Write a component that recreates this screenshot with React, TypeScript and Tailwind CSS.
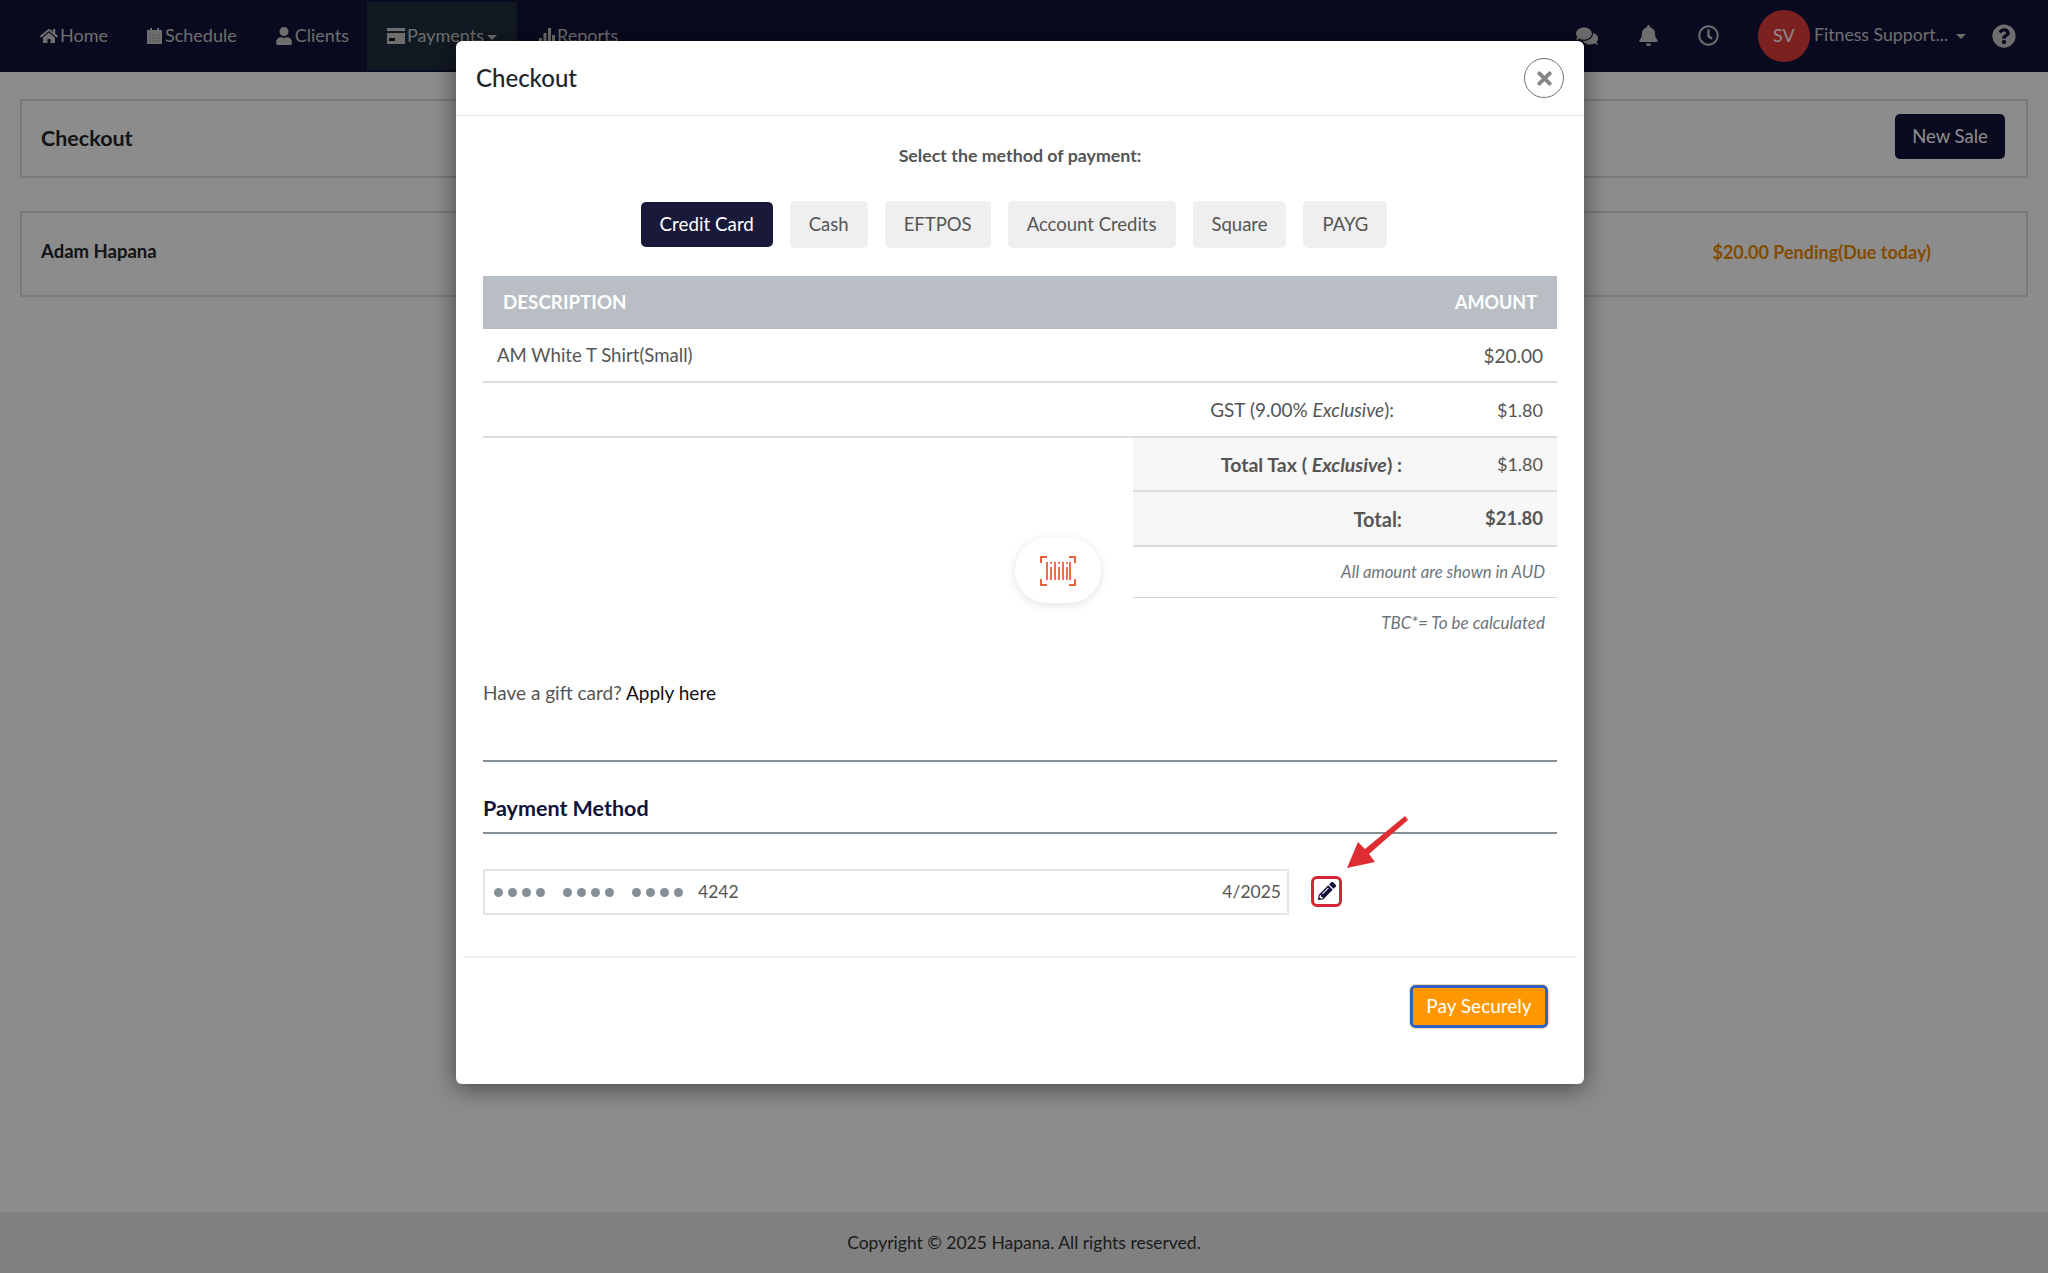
import { FaBell, FaComments, FaHome, FaPencilAlt, FaQuestionCircle, FaRegClock, FaTimes, FaUser } from 'react-icons/fa'

const methods = ['Cash', 'EFTPOS', 'Account Credits', 'Square', 'PAYG']

function CalendarIcon() {
  return (
    <svg width="17" height="18" viewBox="0 0 17 18" fill="currentColor">
      <path d="M1 3h3V1h2v2h5V1h2v2h3v14H1z" />
      <path
        d="M3 7h2v2H3zm3 0h2v2H6zm3 0h2v2H9zm3 0h2v2h-2zM3 10h2v2H3zm3 0h2v2H6zm3 0h2v2H9zm3 0h2v2h-2zM3 13h2v2H3zm3 0h2v2H6zm3 0h2v2H9zm3 0h2v2h-2z"
        fill="#8c8c8c"
        opacity="0.4"
      />
    </svg>
  )
}

function CardIcon() {
  return (
    <svg width="18" height="16" viewBox="0 0 18 16" fill="currentColor">
      <path d="M0 0h18v3H0zM0 5h18v11H0z" />
      <path d="M2 10h6v3H2z" fill="#111a24" />
    </svg>
  )
}

function BarsIcon() {
  return (
    <svg width="16" height="16" viewBox="0 0 16 16" fill="currentColor">
      <path d="M0 10h3v6H0zM4.500 5h3v11h-3zM9 0h3v16H9zM13 7h3v9h-3z" />
    </svg>
  )
}

function BarcodeIcon() {
  return (
    <svg width="36" height="30" viewBox="0 0 36 30" fill="none" stroke="#e8623d" strokeWidth="2">
      <path d="M1 7V1h6M29 1h6v6M1 23v6h6M29 29h6v-6" />
      <path d="M7 6v18M11 11v13M11 6v2M15 6v18M19 11v13M19 6v2M23 6v18M27 11v13M27 6v2M30 6v18" strokeWidth="1.800" />
    </svg>
  )
}

function NavItem({ icon, label }: { icon: React.ReactNode; label: string }) {
  return (
    <div className="flex items-center gap-[2px] text-[18px] text-[#c9c9c9]">
      {icon}
      <span>{label}</span>
    </div>
  )
}

function Dots() {
  return (
    <span className="flex gap-[5px]">
      {[0, 1, 2, 3].map((i) => (
        <span key={i} className="h-[9px] w-[9px] rounded-full bg-[#868e96]" />
      ))}
    </span>
  )
}

export default function App() {
  return (
    <div className="relative flex h-[1273px] flex-col overflow-hidden bg-white font-['Lato','Liberation_Sans',sans-serif] text-[#555]">
      {/* page behind the dialog */}
      <header className="flex h-[72px] shrink-0 items-center justify-between bg-[#12133a] pb-[1px] pl-[40px] pr-[32px]">
        <nav className="flex h-full items-center gap-[38px]">
          <NavItem icon={<FaHome size={18} />} label="Home" />
          <NavItem icon={<CalendarIcon />} label="Schedule" />
          <NavItem icon={<FaUser size={18} />} label="Clients" />
          <div className="-mx-[20px] flex h-[68px] items-center bg-[#1f2f40] px-[20px]">
            <NavItem
              icon={<CardIcon />}
              label="Payments"
            />
            <span className="ml-[3px] mt-[4px] border-x-[5px] border-t-[5px] border-x-transparent border-t-[#c9c9c9]" />
          </div>
          <div className="ml-[4px]">
            <NavItem icon={<BarsIcon />} label="Reports" />
          </div>
        </nav>
        <div className="flex items-center text-[#c9c9c9]">
          <FaComments size={22} className="mr-[40px]" />
          <FaBell size={21} className="mr-[39px]" />
          <FaRegClock size={21} className="mr-[39px]" />
          <div className="flex h-[52px] w-[52px] items-center justify-center rounded-full bg-[#e23b3b] text-[18px] text-white">SV</div>
          <span className="ml-[4px] text-[17.700px]">Fitness Support...</span>
          <span className="ml-[8px] mt-[2px] border-x-[5px] border-t-[5px] border-x-transparent border-t-[#c9c9c9]" />
          <FaQuestionCircle size={24} className="ml-[26px]" />
        </div>
      </header>

      <main className="flex-1 px-[20px] pt-[27px]">
        <div className="flex h-[79px] items-center justify-between border-2 border-[#dedede] pl-[19px] pr-[21px]">
          <h1 className="text-[21.500px] font-bold text-[#212529]">Checkout</h1>
          <button className="mb-[4px] h-[45px] w-[110px] rounded-[5px] bg-[#12133a] text-[18.500px] text-white">New Sale</button>
        </div>
        <div className="mt-[33px] flex h-[86px] items-center justify-between border-2 border-[#dedede] pb-[4px] pl-[19px] pr-[95px]">
          <span className="text-[18.500px] font-bold text-[#212529]">Adam Hapana</span>
          <span className="text-[18px] font-bold text-[#f08a00]">$20.00 Pending(Due today)</span>
        </div>
      </main>

      <footer className="flex h-[61px] shrink-0 items-center justify-center bg-[#e9e9e9] pt-[2px] text-[17.500px] text-[#333]">
        Copyright © 2025 Hapana. All rights reserved.
      </footer>

      {/* overlay and dialog */}
      <div className="absolute inset-0 bg-black/45" />
      <div className="absolute left-[456px] top-[41px] w-[1128px] rounded-[6px] bg-white shadow-[0_4px_24px_rgba(0,0,0,0.5)]">
        <div className="flex h-[75px] items-center justify-between border-b border-[#dee2e6] pl-[20px] pr-[20px]">
          <h2 className="text-[24px] font-medium text-[#212529]">Checkout</h2>
          <button className="flex h-[40px] w-[40px] items-center justify-center rounded-full border border-[#6c757d] text-[#868686]">
            <FaTimes size={21} />
          </button>
        </div>

        <div className="px-[27px]">
          <p className="pt-[27px] text-center text-[17.800px] font-bold leading-[24px]">Select the method of payment:</p>

          <div className="mt-[34px] flex justify-center gap-[17px] pr-[12px]">
            <button className="my-px h-[45px] w-[132px] rounded-[5px] bg-[#19193a] text-[18.800px] text-white">Credit Card</button>
            {methods.map((m) => (
              <button key={m} className="h-[47px] rounded-[5px] bg-[#efefef] px-[19px] pt-[1px] text-[18.500px]">
                {m}
              </button>
            ))}
          </div>

          <div className="mt-[28px]">
            <div className="flex h-[53px] items-center justify-between bg-[#b9bec4] px-[20px] text-[18px] font-bold text-white">
              <span className="text-[18.800px]">DESCRIPTION</span>
              <span>AMOUNT</span>
            </div>
            <div className="flex h-[54px] items-center justify-between border-b-2 border-[#dcdcdc] px-[14px] pt-[2px] text-[18.600px]">
              <span>AM White T Shirt(Small)</span>
              <span className="text-[19px]">$20.00</span>
            </div>
            <div className="flex h-[55px] items-center justify-end border-b-2 border-[#dcdcdc] pr-[14px] pt-[2px] text-[19px]">
              <span>GST (9.00% <em>Exclusive</em>):</span>
              <span className="w-[149px] text-right text-[18px]">$1.80</span>
            </div>

            <div className="flex">
              <div className="flex flex-1 items-start justify-end pr-[32px] pt-[100px]">
                <div className="flex h-[65px] w-[86px] items-center justify-center rounded-[32px] bg-white shadow-[0_2px_10px_rgba(0,0,0,0.12)]">
                  <BarcodeIcon />
                </div>
              </div>
              <div className="w-[424px]">
                <div className="flex h-[54px] items-center justify-end border-b-2 border-[#dcdcdc] bg-[#f7f7f7] pr-[14px] pt-[1px] text-[19.500px]">
                  <span className="font-bold">Total Tax ( <em>Exclusive</em>) :</span>
                  <span className="w-[141px] text-right text-[18px]">$1.80</span>
                </div>
                <div className="flex h-[55px] items-center justify-end border-b-2 border-[#dcdcdc] bg-[#f7f7f7] pr-[14px] pt-[1px] text-[20px] font-bold">
                  <span>Total:</span>
                  <span className="w-[141px] text-right text-[18.500px]">$21.80</span>
                </div>
                <div className="flex h-[51px] items-center justify-end border-b border-[#ced4da] pr-[12px] pt-[2px] text-[16.700px] italic text-[#6c757d]">
                  All amount are shown in AUD
                </div>
                <div className="flex h-[49px] items-center justify-end pr-[12px] pt-[1px] text-[17px] italic text-[#6c757d]">
                  TBC*= To be calculated
                </div>
              </div>
            </div>
          </div>

          <p className="mt-[33px] text-[19px] leading-[26px]">
            Have a gift card? <span className="text-[#111]">Apply here</span>
          </p>

          <div className="mt-[54px] border-t-2 border-[#868e96] pt-[31px]">
            <h3 className="border-b-2 border-[#868e96] pb-[9px] text-[21.500px] font-bold leading-[30px] text-[#12133a]">Payment Method</h3>
          </div>

          <div className="mt-[35px] flex items-center">
            <div className="flex h-[46px] w-[806px] items-center justify-between border-2 border-[#e4e4e4] pl-[9px] pr-[6px] text-[17.500px]">
              <span className="flex items-center">
                <Dots />
                <span className="ml-[18px]"><Dots /></span>
                <span className="ml-[18px]"><Dots /></span>
                <span className="ml-[15px]">4242</span>
              </span>
              <span>4/2025</span>
            </div>
            <button className="relative ml-[22px] -mt-[2px] flex h-[31px] w-[31px] items-center justify-center rounded-[6px] border-[3px] border-[#d32535] text-[#12133a]">
              <FaPencilAlt size={18} />
              <svg className="absolute left-[27px] top-[-65px]" width="72" height="58" viewBox="0 0 72 58">
                <path d="M64 2 67 6 28 40 34 48 6 54 17 28 24 35Z" fill="#de2e33" />
              </svg>
            </button>
          </div>
        </div>

        <div className="mx-[7px] mt-[41px] flex h-[128px] justify-end border-t-2 border-[#eeeeee] pr-[29px] pt-[27px]">
          <button className="h-[43px] w-[138px] rounded-[5px] border-[3px] border-[#2f62c0] bg-[#ff9800] text-[19px] text-white outline outline-1 outline-[#f3dcb7]">
            Pay Securely
          </button>
        </div>
      </div>
    </div>
  )
}
